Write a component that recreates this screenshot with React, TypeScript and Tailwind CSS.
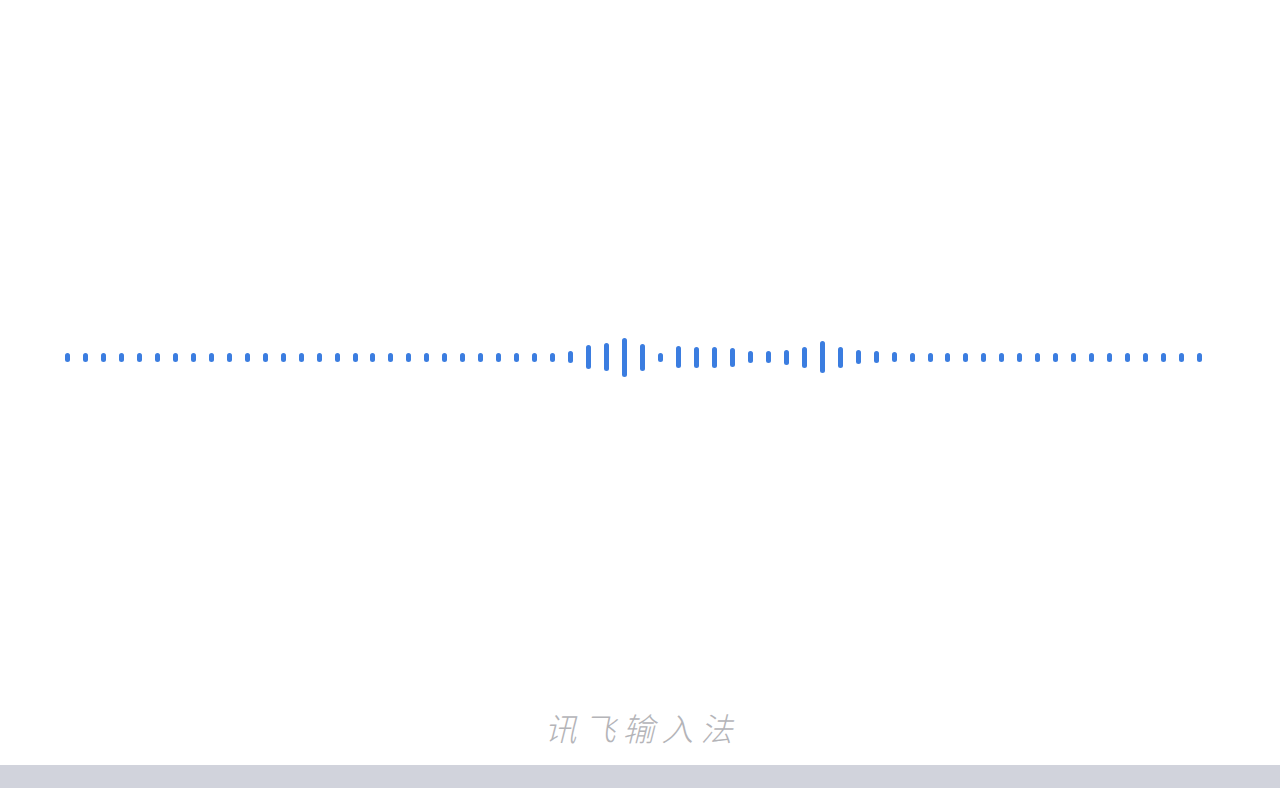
const heights: number[] = [
  ...Array(28).fill(9),
  12, 24, 28, 39, 27, 9, 22, 21, 21, 19, 12, 12, 15, 21, 32, 21, 14, 12, 10,
  ...Array(17).fill(9),
];

export default function App() {
  return (
    <div className="w-[1280px] h-[788px] bg-white flex flex-col overflow-hidden">
      <div className="flex-1 flex flex-col">
        <div className="mt-[337px] h-[40px] pl-[65px] w-[1203px] flex items-center justify-between">
          {heights.map((h, i) => (
            <div
              key={i}
              className="w-[5px] rounded-full bg-[#3b7de0]"
              style={{ height: h }}
            />
          ))}
        </div>
        <div className="flex-1" />
        <div
          className="mb-[18px] text-center text-[32px] leading-[40px] italic tracking-[7px] pl-[4px] text-[#b4b4b8]"
          style={{ fontFamily: '"Noto Sans CJK SC", "Noto Sans", sans-serif', fontWeight: 300 }}
        >
          讯飞输入法
        </div>
      </div>
      <div className="h-[23px] bg-[#d1d3dc]" />
    </div>
  );
}
